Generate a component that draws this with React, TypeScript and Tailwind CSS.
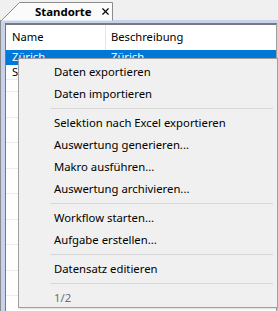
import { X } from 'lucide-react';

const font = { fontFamily: '"Segoe UI", "Noto Sans", Arial, sans-serif' };

type Item = { label: string; disabled?: boolean } | 'sep';

const items: Item[] = [
  { label: 'Daten exportieren' },
  { label: 'Daten importieren' },
  'sep',
  { label: 'Selektion nach Excel exportieren' },
  { label: 'Auswertung generieren...' },
  { label: 'Makro ausführen...' },
  { label: 'Auswertung archivieren...' },
  'sep',
  { label: 'Workflow starten...' },
  { label: 'Aufgabe erstellen...' },
  'sep',
  { label: 'Datensatz editieren' },
  'sep',
  { label: '1/2', disabled: true },
];

function ContextMenu() {
  return (
    <div className="absolute left-[18px] top-[58px] w-[260px] h-[250px] bg-[#f0f0f0] border border-[#a0a0a0] shadow-[1px_1px_2px_rgba(0,0,0,0.15)] py-[2px] pl-[2px]">
      {items.map((it, i) =>
        it === 'sep' ? (
          <div key={i} className="h-[7px] flex items-center pl-[29px] pr-[4px]">
            <div className="h-px w-full bg-[#d7d7d7]" />
          </div>
        ) : (
          <div
            key={i}
            className={`h-[22px] flex items-center pl-[33px] text-[11.3px] ${it.disabled ? 'text-[#6d6d6d]' : 'text-black'}`}
          >
            {it.label}
          </div>
        )
      )}
    </div>
  );
}

export default function App() {
  const rows = Array.from({ length: 9 });
  return (
    <div className="relative w-[278px] h-[311px] bg-[#f0f0f0] overflow-hidden" style={font}>
      {/* Tab strip */}
      <div className="relative h-[20px] flex">
        <div className="relative w-[114px] h-[20px]">
          <svg width="114" height="21" className="absolute left-0 top-0">
            <path d="M1.5 20.5 L19.5 2.5 L112.5 2.5 L112.5 20.5" fill="#fbfbfb" stroke="#8c8c8c" />
          </svg>
          <div className="relative flex items-center h-[20px] pt-[3px] pl-[35px] gap-[8px]">
            <span className="text-[11.4px] font-bold text-black">Standorte</span>
            <X size={11} strokeWidth={2.5} className="text-black" />
          </div>
        </div>
      </div>

      {/* Panel frame */}
      <div className="h-[291px] bg-[#c7d3ec] pl-[2px] pt-[3px] pr-[1px] border-l border-[#8c8c8c]">
        <div className="h-full border-l-[1px] border-t-[2px] border-[#7a7a7a] border-r border-r-[#a0a0a0] ml-[2px] bg-white">
          <div className="h-[25px] flex items-center text-[11.2px] text-black">
            <div className="w-[100px] pl-[6px] border-r border-[#e5e5e5] h-full flex items-center">Name</div>
            <div className="pl-[5px]">Beschreibung</div>
          </div>
          <div className="h-[15px] bg-[#0078d7] text-white text-[11.2px] flex items-center">
            <div className="w-[100px] pl-[6px]">Zürich</div>
            <div className="pl-[5px]">Zürich</div>
          </div>
          <div className="h-[15px] text-[11.2px] flex items-center border-b border-[#ececec]">
            <div className="w-[100px] pl-[6px]">Sankt Gallen</div>
          </div>
          <div className="h-[12px] border-b border-[#ececec]" />
          {rows.map((_, i) => (
            <div key={i} className="h-[25.5px] border-b border-[#ececec]" />
          ))}
        </div>
      </div>

      <ContextMenu />
    </div>
  );
}
